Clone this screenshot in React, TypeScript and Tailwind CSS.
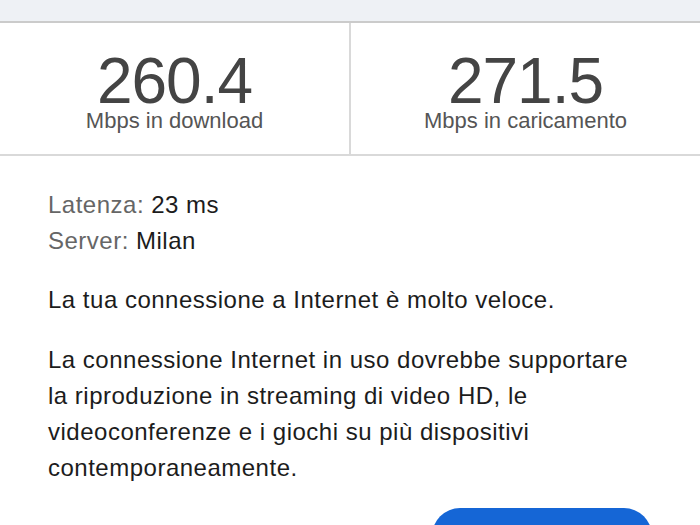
export default function App() {
  const font = { fontFamily: '"Liberation Sans", Arial, Helvetica, sans-serif' };
  return (
    <div className="w-[700px] h-[525px] overflow-hidden bg-white" style={font}>
      <div className="h-[23px] bg-[#eef1f5] border-b-2 border-[#cbcbcb]" />
      <div className="flex h-[133px] border-b-2 border-[#d9d9d9]">
        <div className="flex-1 flex flex-col items-center pt-[33px] border-r-2 border-[#d9d9d9]">
          <div className="text-[64px] leading-[50px] text-[#444444] tracking-[-1px]">260.4</div>
          <div className="mt-[3px] text-[22px] leading-[24px] text-[#555555]">Mbps in download</div>
        </div>
        <div className="flex-1 flex flex-col items-center pt-[33px]">
          <div className="text-[64px] leading-[50px] text-[#444444] tracking-[-1px]">271.5</div>
          <div className="mt-[3px] text-[22px] leading-[24px] text-[#555555]">Mbps in caricamento</div>
        </div>
      </div>
      <div className="px-[48px] pt-[31px] text-[24px] leading-[36px] tracking-[0.5px] text-[#1c1c1c]">
        <div>
          <span className="text-[#666666]">Latenza:</span> 23 ms
        </div>
        <div>
          <span className="text-[#666666]">Server:</span> Milan
        </div>
        <p className="mt-[23px]">La tua connessione a Internet è molto veloce.</p>
        <p className="mt-[24px]">
          La connessione Internet in uso dovrebbe supportare la riproduzione in streaming di video HD, le
          videoconferenze e i giochi su più dispositivi contemporaneamente.
        </p>
      </div>
      <div className="flex justify-end items-start pr-[48px] mt-[22px]">
        <span className="mt-[8px] mr-[37px] text-[24px] leading-[36px] text-[#444444]">Scopri di più</span>
        <button className="w-[220px] h-[64px] rounded-[28px] bg-[#1566d6] text-white text-[20px] leading-[24px]">
          Riprova
        </button>
      </div>
    </div>
  );
}
